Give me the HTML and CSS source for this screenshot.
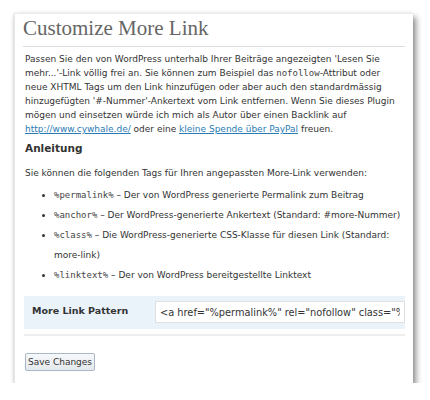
FILE: index.html
```html
<!DOCTYPE html>
<html>
<head>
<meta charset="utf-8">
<link rel="stylesheet" href="styles.css">
</head>
<body>
<div class="stage">
  <div class="card">
    <h2 class="title">Customize More Link</h2>
    <p class="intro">Passen Sie den von WordPress unterhalb Ihrer Beiträge angezeigten 'Lesen Sie mehr...'-Link völlig frei an. Sie können zum Beispiel das <code>nofollow</code>-Attribut oder neue XHTML Tags um den Link hinzufügen oder aber auch den standardmässig hinzugefügten '#-Nummer'-Ankertext vom Link entfernen. Wenn Sie dieses Plugin mögen und einsetzen würde ich mich als Autor über einen Backlink auf <a href="#">http://www.cywhale.de/</a> oder eine <a href="#">kleine Spende über PayPal</a> freuen.</p>
    <h3 class="sub">Anleitung</h3>
    <p class="lead">Sie können die folgenden Tags für Ihren angepassten More-Link verwenden:</p>
    <ul class="tags">
      <li><code>%permalink%</code> – Der von WordPress generierte Permalink zum Beitrag</li>
      <li><code>%anchor%</code> – Der WordPress-generierte Ankertext (Standard: #more-Nummer)</li>
      <li><code>%class%</code> – Die WordPress-generierte CSS-Klasse für diesen Link (Standard: more-link)</li>
      <li><code>%linktext%</code> – Der von WordPress bereitgestellte Linktext</li>
    </ul>
    <div class="formrow">
      <div class="label">More Link Pattern</div>
      <input class="field" type="text" value="&lt;a href=&quot;%permalink%&quot; rel=&quot;nofollow&quot; class=&quot;%class%&quot;&gt;%linktext%&lt;/a&gt;">
    </div>
    <div class="sep"></div>
    <div class="actions"><button class="btn">Save Changes</button></div>
  </div>
</div>
</body>
</html>
```
FILE: styles.css
```css
html, body {
  margin: 0;
  padding: 0;
  background: #ffffff;
}
.stage {
  padding: 13px 0 0 14px;
}
.card {
  width: 399px;
  height: 370px;
  box-sizing: border-box;
  background: #fff;
  border-left: 1px solid #e6e6e6;
  border-top: 1px solid #ececec;
  box-shadow: 3px 4px 6px rgba(0,0,0,0.45), -1px 0 3px rgba(0,0,0,0.08);
  padding: 0 8px 0 8px;
  overflow: hidden;
  font-family: "DejaVu Sans", Verdana, sans-serif;
  color: #333;
}
.title {
  margin: 0;
  padding: 3px 0 7px 0;
  font-family: "Liberation Serif", "Times New Roman", serif;
  font-weight: normal;
  font-size: 21px;
  line-height: 22px;
  color: #666;
  border-bottom: 1px solid #dcdcdc;
}
.intro {
  margin: 5px 0 0 2px;
  font-size: 9px;
  line-height: 14px;
}
code {
  font-family: "DejaVu Sans Mono", "Liberation Mono", monospace;
  font-size: 9px;
  line-height: 1;
  color: #444;
}
a {
  color: #2a7bb5;
  text-decoration: underline;
}
.sub {
  margin: 2px 0 0 2px;
  font-size: 10.5px;
  line-height: 20px;
  font-weight: bold;
  color: #333;
}
.lead {
  margin: 8px 0 0 2px;
  font-size: 9px;
  line-height: 14px;
}
.tags {
  margin: 5px 0 0 0;
  padding: 0 0 0 31px;
  font-size: 9px;
  line-height: 20px;
  list-style: disc;
}
.tags li {
  margin: 0;
  padding-left: 0;
}
.formrow {
  margin: 11px 0 0 1px;
  background: #eaf2fa;
  height: 33px;
  display: flex;
  align-items: flex-start;
}
.label {
  width: 131px;
  padding: 9px 0 0 8px;
  box-sizing: border-box;
  font-size: 9.5px;
  font-weight: bold;
  color: #333;
}
.field {
  margin-top: 5px;
  flex: 1;
  min-width: 0;
  height: 22px;
  box-sizing: border-box;
  border: 1px solid #dfdfdf;
  background: #fff;
  padding: 0 4px;
  font-family: "DejaVu Sans", Verdana, sans-serif;
  font-size: 9.8px;
  color: #333;
}
.sep {
  margin: 5px 0 0 1px;
  height: 2px;
  background: #eeeeee;
}
.actions {
  padding: 14px 0 0 2px;
}
.btn {
  font-family: "DejaVu Sans", Verdana, sans-serif;
  font-size: 9px;
  color: #333;
  height: 18px;
  width: 70px;
  padding: 0;
  border: 1px solid #a8b8c6;
  border-radius: 2px;
  background: linear-gradient(#f6f8fa, #e4e8ec);
}
```
